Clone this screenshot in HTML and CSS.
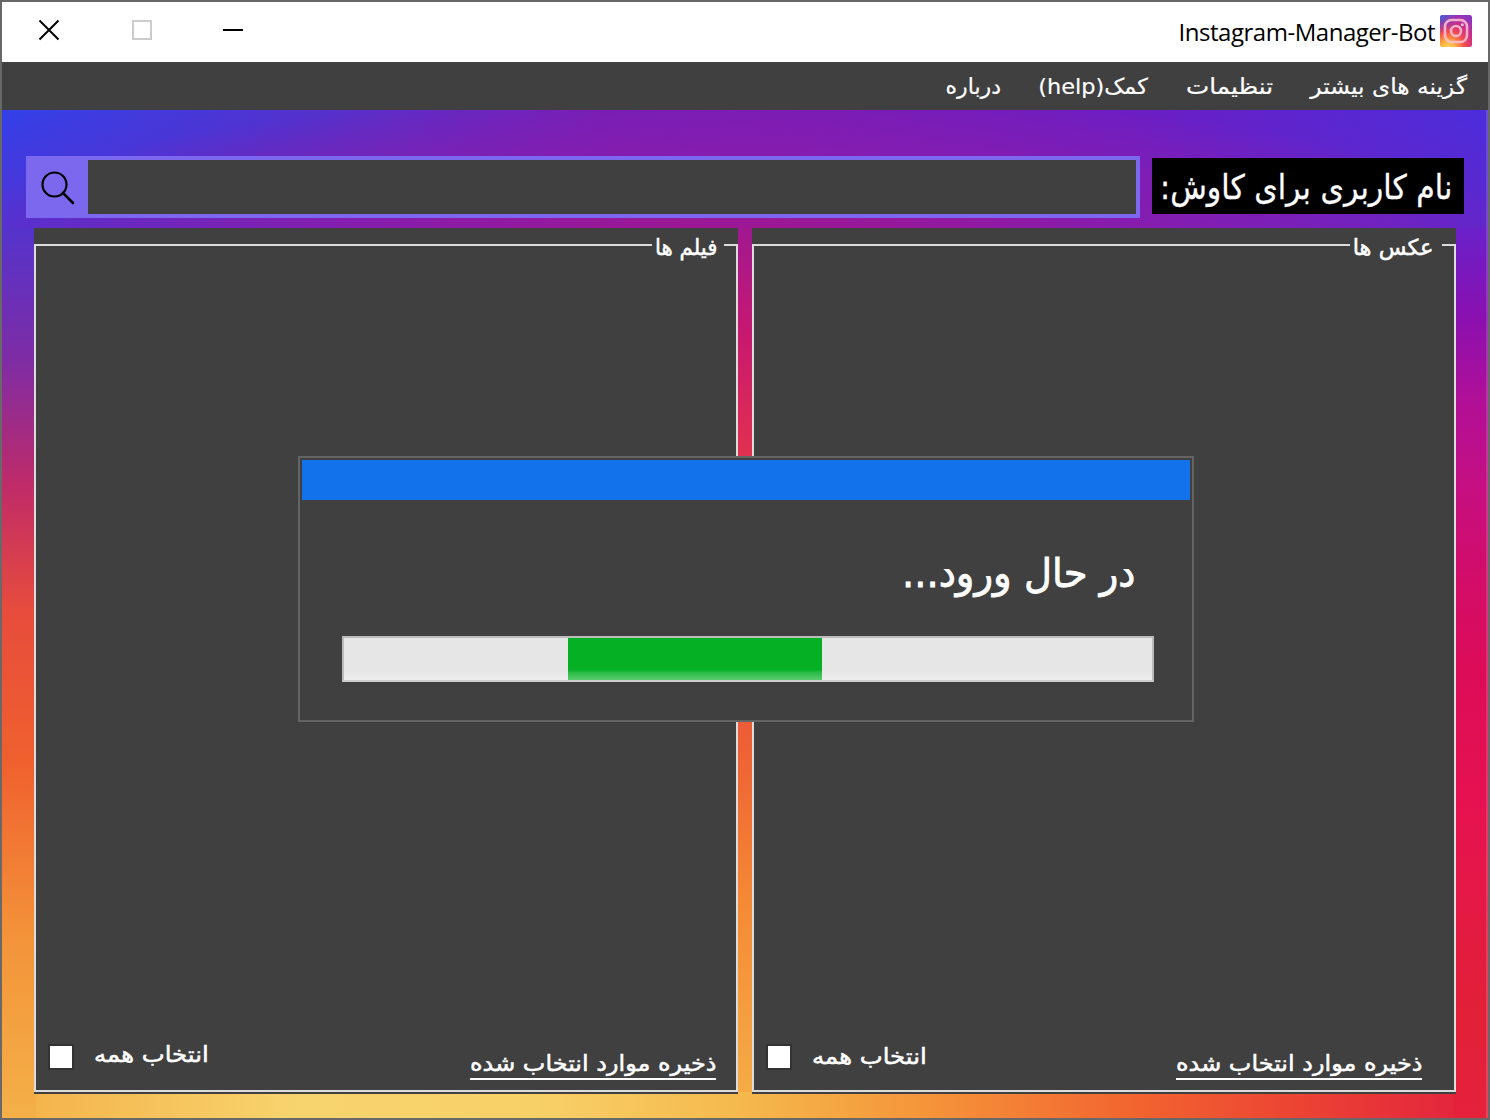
FILE: index.html
```html
<!DOCTYPE html>
<html lang="fa" dir="rtl">
<head>
<meta charset="utf-8">
<title>Instagram-Manager-Bot</title>
<link rel="stylesheet" href="styles.css">
</head>
<body>
<div class="window">
  <header class="titlebar">
    <div class="brand">
      <svg class="logo" viewBox="0 0 32 32">
        <defs>
          <radialGradient id="ig" cx="0.25" cy="1.05" r="1.15"><stop offset="0" stop-color="#ffdc60"/><stop offset=".2" stop-color="#fdb13f"/><stop offset=".45" stop-color="#f3504d"/><stop offset=".7" stop-color="#cf2c85"/><stop offset="1" stop-color="#8a35c0"/></radialGradient>
          <radialGradient id="blue" cx="0" cy="0" r=".6"><stop offset="0" stop-color="#3b62d8"/><stop offset="1" stop-color="#7040cc" stop-opacity="0"/></radialGradient>
        </defs>
        <rect width="32" height="32" rx="2.5" fill="url(#ig)"/><rect width="32" height="32" rx="2.5" fill="url(#blue)"/>
        <g fill="none" stroke="#ffc4d8" stroke-width="2.6" opacity=".85"><rect x="5" y="5" width="22" height="22" rx="6.5"/><circle cx="16" cy="16" r="5"/></g>
        <circle cx="22.3" cy="9.7" r="1.5" fill="#ffc4d8"/>
      </svg>
      <span class="title" dir="ltr">Instagram-Manager-Bot</span>
    </div>
    <div class="controls">
      <svg viewBox="0 0 22 22"><path d="M1 11H21" stroke="#000" stroke-width="2"/></svg>
      <svg class="maximize" viewBox="0 0 22 22"><path d="M2 2H20V20H2Z" fill="none" stroke="#ccc" stroke-width="2"/></svg>
      <svg viewBox="0 0 22 22"><path d="M1.5 1.5L20.5 20.5M20.5 1.5L1.5 20.5" stroke="#000" stroke-width="2"/></svg>
    </div>
  </header>
  <nav class="menu">
    <span class="more">گزینه های بیشتر</span>
    <span class="settings">تنظیمات</span>
    <span class="help">کمک(help)</span>
    <span class="about">درباره</span>
  </nav>
  <main class="content">
    <div class="search">
      <div class="label"><span>نام کاربری برای کاوش:</span></div>
      <div class="field"><div class="input"></div>
        <svg class="glass" viewBox="0 0 34 34"><circle cx="13.5" cy="13.5" r="12" fill="none" stroke="#000" stroke-width="2.2"/><path d="M22 22L32 32" stroke="#000" stroke-width="2.6" stroke-linecap="round"/></svg>
      </div>
    </div>
    <div class="panels">
      <section class="panel photos">
        <div class="frame"></div>
        <h2 class="legend"><span>عکس ها</span></h2>
        <div class="actions"><a class="save"><span>ذخیره موارد انتخاب شده</span></a><div class="all"><span>انتخاب همه</span><i class="box"></i></div></div>
      </section>
      <section class="panel videos">
        <div class="frame"></div>
        <h2 class="legend"><span>فیلم ها</span></h2>
        <div class="actions"><a class="save"><span>ذخیره موارد انتخاب شده</span></a><div class="all"><span>انتخاب همه</span><i class="box"></i></div></div>
      </section>
    </div>
  </main>
  <div class="dialog">
    <div class="bar"></div>
    <p class="status"><span>در حال ورود...</span></p>
    <div class="progress"><div class="chunk"></div></div>
  </div>
</div>
</body>
</html>
```
FILE: styles.css
```css
* { box-sizing: border-box; }
body { margin: 0; width: 1490px; height: 1120px; overflow: hidden; font-family: "DejaVu Sans", sans-serif; color: #fff; }
.window { position: relative; width: 1490px; height: 1120px; border: 2px solid #686868; display: flex; flex-direction: column; background: #404040; }
.titlebar { height: 60px; background: #fff; color: #000; display: flex; justify-content: space-between; padding: 0 16px 0 36px; }
.brand { display: flex; align-items: flex-start; gap: 5px; padding-top: 13px; }
.logo { width: 32px; height: 32px; }
.title { font: 24px/34px "Open Sans", sans-serif; letter-spacing: -0.47px; white-space: nowrap; }
.controls { display: flex; gap: 69px; padding-top: 17px; }
.controls svg { width: 22px; height: 22px; }
.controls .maximize { margin-left: 2px; }
.menu { height: 48px; display: flex; padding: 0 21px 0 0; gap: 38px; font-size: 22px; line-height: 49px; -webkit-text-stroke: 0.2px #fff; }
.menu span { white-space: nowrap; transform-origin: right center; }
.more { width: 156px; transform: scaleX(1.06); }
.settings { width: 87px; transform: scaleX(1.12); }
.help { width: 109px; transform: scaleX(1.02); }
.about { width: 55px; }
.content {
  flex: 1; padding: 46px 24px 0 24px;
  background:
    linear-gradient(rgba(255, 255, 255, .15), rgba(255, 255, 255, .15)) right top / 2px 100% no-repeat,
    linear-gradient(180deg, #5433cc 0%, #7f2ca4 15%, #c02b68 29%, #e74c3c 43%, #f0602e 60%, #f3943a 80%, #f4b048 100%) left bottom / 34px 890px no-repeat,
    linear-gradient(180deg, #6a20ca 0%, #8a10b0 10%, #b00f98 19%, #c60f82 29%, #d20d6a 39%, #dd0c58 50%, #e61250 65%, #e22038 88%, #e5213c 100%) right bottom / 34px 890px no-repeat,
    linear-gradient(90deg, #f4b048 0%, #f8d46e 20%, #f8d068 36%, #f5b84c 50%, #f5953a 62%, #f2652f 76%, #ec4433 87%, #e21f3f 100%) left bottom / 100% 26px no-repeat,
    linear-gradient(180deg, #a01890 0%, #c81870 12%, #e03050 25%, #ee6035 58%, #f58a35 76%, #f4b048 100%) 734px bottom / 20px 890px no-repeat,
    radial-gradient(ellipse 800px 160px at 735px 140px, #a5158a 0%, rgba(138, 28, 171, .85) 50%, rgba(106, 34, 200, 0) 100%) left top / 100% 118px no-repeat,
    linear-gradient(180deg, rgba(128, 30, 180, 0) 0, rgba(128, 30, 180, .38) 118px) left top / 100% 118px no-repeat,
    linear-gradient(90deg, #3340e8 0%, #5531cc 22%, #741fb8 40%, #791cb6 52%, #6c1ec4 76%, #4b2ddb 100%);
}
.search { display: flex; gap: 12px; height: 62px; }
.label { width: 312px; height: 56px; margin-top: 2px; background: #000; font-size: 34px; line-height: 58px; padding-right: 12px; white-space: nowrap; }
.label span { display: inline-block; transform: scaleX(.882); transform-origin: right center; -webkit-text-stroke: 0.3px #fff; }
.field { width: 1114px; height: 62px; background: #7b68ee; display: flex; padding: 4px; }
.input { width: 1048px; height: 54px; background: #404040; }
.glass { width: 34px; height: 34px; margin: 11px 13px 0 0; }
.panels { display: flex; gap: 14px; padding: 10px 8px 0; }
.panel { width: 704px; height: 866px; background: #404040; padding-top: 16px; position: relative; -webkit-text-stroke: 0.5px #fff; }
.frame { height: 848px; border: 2px solid #dcdcdc; }
.legend { position: absolute; top: 2px; right: 14px; margin: 0; width: 92px; height: 34px; padding-right: 8px; background: #404040; font-size: 22px; font-weight: 400; line-height: 36px; white-space: nowrap; }
.legend span { display: inline-block; transform: scaleX(1.03); transform-origin: right center; }
.videos .legend { width: 72px; padding-right: 7px; }
.videos .legend span { transform: scaleX(.97); }
.actions { position: absolute; left: 14px; right: 22px; bottom: 14px; height: 40px; display: flex; justify-content: space-between; }
.photos .actions { right: 34px; }
.save { width: 246px; height: 40px; border-bottom: 2px solid #fff; font-size: 22px; line-height: 48px; white-space: nowrap; }
.save span { display: inline-block; transform: scaleX(1.088); transform-origin: right center; }
.all { display: flex; gap: 20px; font-size: 22px; line-height: 30px; white-space: nowrap; }
.all span { transform: scaleX(1.107); transform-origin: left center; }
.photos .all span { margin-top: 2px; }
.box { width: 26px; height: 26px; background: #fff; border: 2px solid #333; margin-top: 4px; }
.dialog { position: absolute; left: 296px; top: 454px; width: 896px; height: 266px; border: 2px solid #646464; background: #404040; padding: 2px; }
.bar { height: 40px; background: #1272eb; }
.status { margin: 43px 55px 0 0; font-size: 40px; line-height: 60px; height: 60px; white-space: nowrap; }
.status span { display: inline-block; transform: scaleX(.963); transform-origin: right center; -webkit-text-stroke: 0.8px #fff; }
.progress { width: 812px; height: 46px; margin: 33px 36px 0 0; border: 2px solid #bcbcbc; border-bottom-color: #ccc; background: linear-gradient(#e6e6e6 78%, #eee); direction: ltr; }
.chunk { margin-left: 224px; width: 254px; height: 42px; background: linear-gradient(#06b025 76%, #2aba45 82%, #5bcc70); }
```
